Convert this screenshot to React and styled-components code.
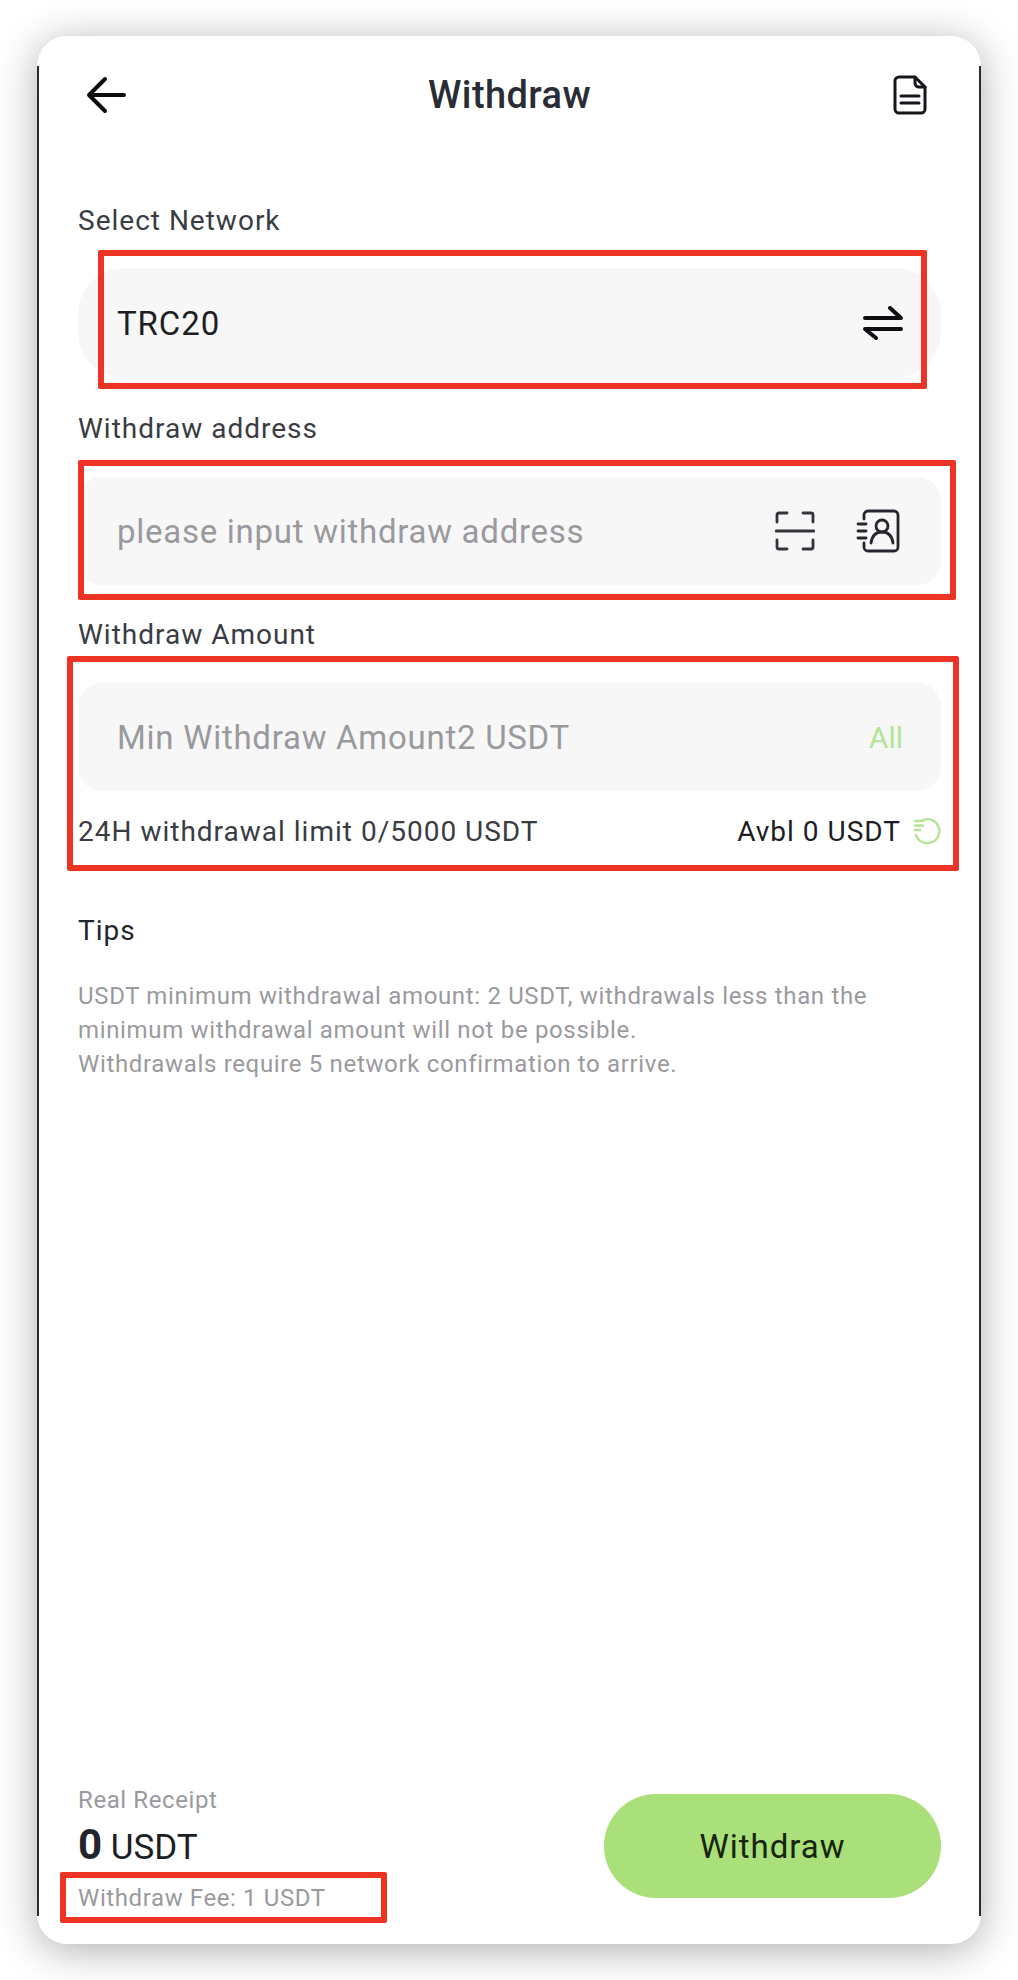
import React from 'react'

import styled, { createGlobalStyle } from 'styled-components'

const GlobalStyle = createGlobalStyle`
    * {
        box-sizing: border-box;
    }
    body {
        margin: 0;
        background: #ffffff;
        font-family: 'Roboto', 'Liberation Sans', sans-serif;
    }
`

function App() {
    return (
        <>
            <GlobalStyle />
            <Page>
                <Card>
                    <Header>
                        <HeaderIcon aria-label="back">
                            <svg width="40" height="38" viewBox="0 0 40 38" fill="none" stroke="#0b0b0f" strokeWidth="4" strokeLinecap="round" strokeLinejoin="round">
                                <path d="M38 19H3M19 3L3 19l16 16" />
                            </svg>
                        </HeaderIcon>
                        <Title>Withdraw</Title>
                        <HeaderIcon aria-label="records">
                            <svg width="34" height="40" viewBox="0 0 34 40" fill="none" stroke="#16161c" strokeWidth="3" strokeLinejoin="round" strokeLinecap="round">
                                <path d="M6 2h16l10 10v22a4 4 0 0 1-4 4H6a4 4 0 0 1-4-4V6a4 4 0 0 1 4-4z" />
                                <path d="M22 2v6a4 4 0 0 0 4 4h6" />
                                <path d="M8 21h18M8 28h18" />
                            </svg>
                        </HeaderIcon>
                    </Header>

                    <Label>Select Network</Label>
                    <Field $height={110} $radius={46} $gap={30}>
                        <FieldValue>TRC20</FieldValue>
                        <svg width="40" height="34" viewBox="0 0 40 34" fill="none" stroke="#0e0e12" strokeWidth="4" strokeLinecap="round" strokeLinejoin="round">
                            <path d="M2 12h36L27 2M38 23H2l11 9" />
                        </svg>
                    </Field>

                    <Label $top={34}>Withdraw address</Label>
                    <Field $height={108} $radius={24} $gap={31}>
                        <Placeholder>please input withdraw address</Placeholder>
                        <FieldIcons>
                            <svg width="40" height="40" viewBox="0 0 40 40" fill="none" stroke="#33343b" strokeWidth="2.8" strokeLinecap="round" strokeLinejoin="round">
                                <path d="M2 11V4a2 2 0 0 1 2-2h8M28 2h8a2 2 0 0 1 2 2v7M2 29v7a2 2 0 0 0 2 2h8M28 38h8a2 2 0 0 0 2-2v-7" />
                                <path d="M1 20h38" />
                            </svg>
                            <svg width="44" height="44" viewBox="0 0 44 44" fill="none" stroke="#26272e" strokeWidth="2.8" strokeLinecap="round" strokeLinejoin="round">
                                <path d="M8 10V6a4 4 0 0 1 4-4h26a4 4 0 0 1 4 4v32a4 4 0 0 1-4 4H12a4 4 0 0 1-4-4v-4" />
                                <path d="M2 15h8M2 22h8M2 29h8" />
                                <circle cx="26" cy="17" r="6" />
                                <path d="M15 34c1-7 5-11 11-11s10 4 11 11" />
                            </svg>
                        </FieldIcons>
                    </Field>

                    <Label $top={33}>Withdraw Amount</Label>
                    <Field $height={108} $radius={24} $gap={31}>
                        <Placeholder>Min Withdraw Amount2 USDT</Placeholder>
                        <AllLink>All</AllLink>
                    </Field>

                    <LimitRow>
                        <LimitText>24H withdrawal limit 0/5000 USDT</LimitText>
                        <Balance>
                            Avbl 0 USDT
                            <svg width="28" height="28" viewBox="0 0 28 28" fill="none" stroke="#b4e497" strokeWidth="2.4" strokeLinecap="round">
                                <path d="M10 3a12 12 0 1 1-7 15" />
                                <path d="M2 4h8M2 8.5h8M2 13h5" />
                            </svg>
                        </Balance>
                    </LimitRow>

                    <TipsTitle>Tips</TipsTitle>
                    <TipsBody>
                        USDT minimum withdrawal amount: 2 USDT, withdrawals less than the
                        <br />
                        minimum withdrawal amount will not be possible.
                        <br />
                        Withdrawals require 5 network confirmation to arrive.
                    </TipsBody>

                    <Footer>
                        <Receipt>
                            <MutedLine>Real Receipt</MutedLine>
                            <ReceiptValue>
                                <strong>0</strong> USDT
                            </ReceiptValue>
                            <FeeLine>Withdraw Fee: 1 USDT</FeeLine>
                        </Receipt>
                        <WithdrawButton>Withdraw</WithdrawButton>
                    </Footer>

                    <Annotation $top={214} $left={61} $width={829} $height={139} />
                    <Annotation $top={424} $left={41} $width={878} $height={140} />
                    <Annotation $top={620} $left={30} $width={892} $height={215} />
                    <Annotation $top={1836} $left={23} $width={327} $height={51} />
                </Card>
            </Page>
        </>
    )
}

export default App

const Page = styled.div`
    height: 1980px;
    padding: 36px 37px;
`
const Card = styled.div`
    position: relative;
    display: flex;
    flex-direction: column;
    width: 944px;
    height: 1908px;
    padding: 0 40px 29px 41px;
    background: #ffffff;
    border-radius: 30px;
    box-shadow: 0 6px 40px rgba(0, 0, 0, 0.32);
    color: #2a2d36;
    &::before {
        content: '';
        position: absolute;
        top: 30px;
        bottom: 28px;
        left: 0;
        right: 0;
        border-left: 2px solid #2c2c30;
        border-right: 2px solid #2c2c30;
        pointer-events: none;
    }
`
const Header = styled.header`
    display: flex;
    justify-content: space-between;
    align-items: center;
    height: 118px;
    margin-bottom: 50px;
    padding: 0 14px 0 8px;
`
const HeaderIcon = styled.div`
    display: flex;
    align-items: center;
`
const Title = styled.h1`
    margin: 0;
    font-size: 38px;
    font-weight: 500;
    line-height: 44px;
    letter-spacing: 0.4px;
    color: #2a2c36;
`
const Label = styled.div`
    margin-top: ${(p) => p.$top || 0}px;
    font-size: 28px;
    line-height: 34px;
    letter-spacing: 1px;
    color: #3a3c44;
`
const Field = styled.div`
    display: flex;
    justify-content: space-between;
    align-items: center;
    height: ${(p) => p.$height}px;
    margin-top: ${(p) => p.$gap}px;
    padding: 0 38px 0 39px;
    background: #f7f7f8;
    border-radius: ${(p) => p.$radius}px;
`
const FieldValue = styled.span`
    font-size: 33px;
    letter-spacing: 0.9px;
    color: #1d1e24;
`
const Placeholder = styled.span`
    font-size: 33px;
    letter-spacing: 0.73px;
    color: #9a9a9e;
`
const FieldIcons = styled.div`
    display: flex;
    align-items: center;
    gap: 41px;
    margin-right: 3px;
`
const AllLink = styled.span`
    font-size: 30px;
    color: #b4e497;
`
const LimitRow = styled.div`
    display: flex;
    justify-content: space-between;
    align-items: center;
    height: 34px;
    margin-top: 23px;
`
const LimitText = styled.span`
    font-size: 28px;
    letter-spacing: 1px;
    color: #3a3c44;
`
const Balance = styled.span`
    display: flex;
    align-items: center;
    gap: 12px;
    font-size: 28px;
    letter-spacing: 1px;
    color: #1d1e24;
`
const TipsTitle = styled.div`
    margin-top: 66px;
    font-size: 28px;
    line-height: 34px;
    letter-spacing: 1px;
    color: #23252e;
`
const TipsBody = styled.p`
    margin: 31px 0 0;
    font-size: 24px;
    line-height: 34px;
    letter-spacing: 0.66px;
    color: #9a9a9e;
`
const Footer = styled.footer`
    display: flex;
    justify-content: space-between;
    align-items: flex-start;
    margin-top: auto;
`
const Receipt = styled.div`
    display: flex;
    flex-direction: column;
`
const MutedLine = styled.div`
    font-size: 24px;
    line-height: 34px;
    letter-spacing: 0.6px;
    color: #9a9a9e;
`
const ReceiptValue = styled.div`
    margin-top: 6px;
    font-size: 35px;
    line-height: 44px;
    color: #1d1e24;
    strong {
        font-size: 42px;
        font-weight: 700;
        color: #23252e;
    }
`
const FeeLine = styled(MutedLine)`
    margin-top: 11px;
`
const WithdrawButton = styled.button`
    width: 337px;
    height: 104px;
    margin-top: 11px;
    border: none;
    border-radius: 52px;
    background: #a9e079;
    font-family: inherit;
    font-size: 33px;
    letter-spacing: 1px;
    color: #17240f;
`
const Annotation = styled.div`
    position: absolute;
    top: ${(p) => p.$top}px;
    left: ${(p) => p.$left}px;
    width: ${(p) => p.$width}px;
    height: ${(p) => p.$height}px;
    border: 6px solid #ec3324;
    border-radius: 2px;
    pointer-events: none;
`
